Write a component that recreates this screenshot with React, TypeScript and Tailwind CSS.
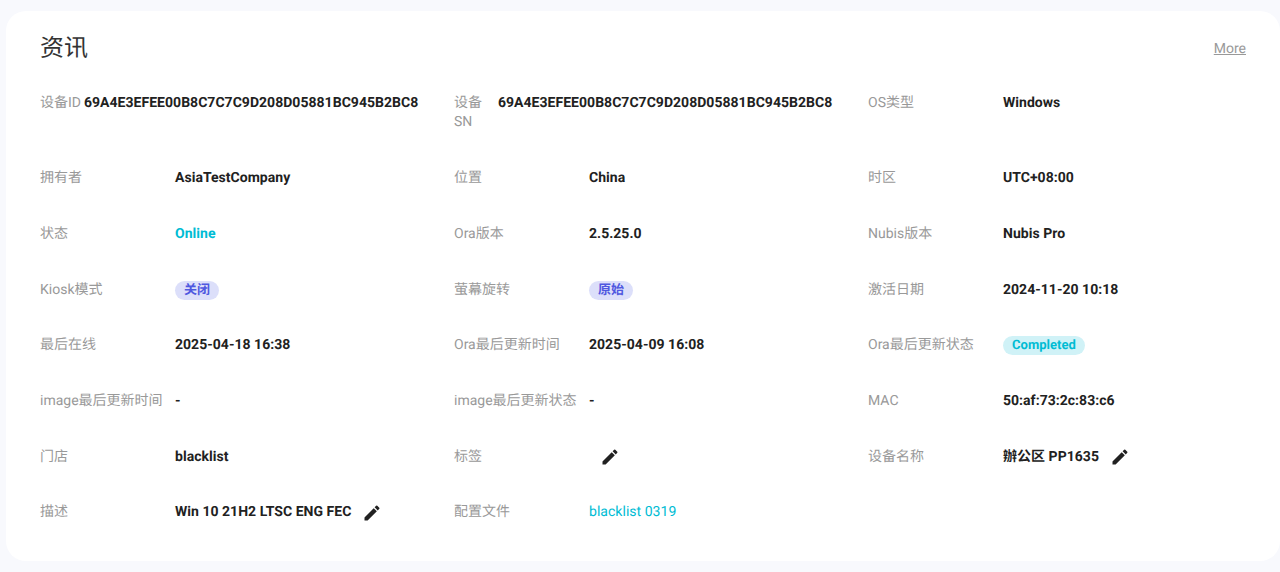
import React from 'react';
import { MdEdit } from 'react-icons/md';

type FieldProps = {
  label: React.ReactNode;
  narrow?: boolean;
  children?: React.ReactNode;
};

const Field: React.FC<FieldProps> = ({ label, narrow, children }) => (
  <div className="flex items-start gap-1">
    {narrow ? (
      <div className="w-10 shrink-0 pb-[0.5px] text-[#999999]">{label}</div>
    ) : (
      <div className="w-[131px] shrink-0 text-[#999999]">{label}</div>
    )}
    <div className="min-h-[19px] shrink-0 whitespace-nowrap font-bold tracking-[0.03px] text-[#212121] flex items-center">{children}</div>
  </div>
);

const EditIcon: React.FC = () => (
  <MdEdit className="ml-[11px] -my-1 text-[#212121]" size={20} />
);

const Pill: React.FC<{ className: string; children: React.ReactNode }> = ({ className, children }) => (
  <span className={`inline-block rounded-full px-[9px] text-[13px] leading-[19px] font-bold ${className}`}>{children}</span>
);

export default function App() {
  const deviceId = '69A4E3EFEE00B8C7C7C9D208D05881BC945B2BC8';

  return (
    <div className="h-[572px] bg-[#f8f9fd] pl-1.5 pt-[11px] overflow-hidden [text-rendering:geometricPrecision] font-['Roboto','Noto_Sans_CJK_SC',sans-serif]">
      <section className="h-[550px] rounded-[20px] bg-white pl-[34px] pt-[21px] text-sm leading-[19px]">
        {/* Header */}
        <div className="flex items-center justify-between pr-[34px]">
          <h2 className="text-2xl leading-8 font-normal text-[#333333]">资讯</h2>
          <a className="pt-0.5 text-[#999999] underline">More</a>
        </div>

        {/* Info grid */}
        <div className="mt-[30px] grid grid-cols-[414px_414px_1fr] gap-y-[36.7px]">
          <Field label={<span className="whitespace-nowrap">设备ID</span>} narrow>{deviceId}</Field>
          <Field label="设备SN" narrow>{deviceId}</Field>
          <Field label="OS类型">Windows</Field>

          <Field label="拥有者">AsiaTestCompany</Field>
          <Field label="位置">China</Field>
          <Field label="时区">UTC+08:00</Field>

          <Field label="状态"><span className="text-[#00bcd4]">Online</span></Field>
          <Field label="Ora版本">2.5.25.0</Field>
          <Field label="Nubis版本">Nubis Pro</Field>

          <Field label="Kiosk模式"><Pill className="bg-[#dcdffa] text-[#4f58e0]">关闭</Pill></Field>
          <Field label="萤幕旋转"><Pill className="bg-[#dcdffa] text-[#4f58e0]">原始</Pill></Field>
          <Field label="激活日期">2024-11-20 10:18</Field>

          <Field label="最后在线">2025-04-18 16:38</Field>
          <Field label="Ora最后更新时间">2025-04-09 16:08</Field>
          <Field label="Ora最后更新状态"><Pill className="bg-[#d0f2f7] text-[#00bcd4]">Completed</Pill></Field>

          <Field label="image最后更新时间">-</Field>
          <Field label="image最后更新状态">-</Field>
          <Field label="MAC">50:af:73:2c:83:c6</Field>

          <Field label="门店">blacklist</Field>
          <Field label="标签"><EditIcon /></Field>
          <Field label="设备名称">辦公区 PP1635<EditIcon /></Field>

          <Field label="描述">Win 10 21H2 LTSC ENG FEC<EditIcon /></Field>
          <Field label="配置文件"><a className="font-normal text-[#00bcd4]">blacklist 0319</a></Field>
        </div>
      </section>
    </div>
  );
}
